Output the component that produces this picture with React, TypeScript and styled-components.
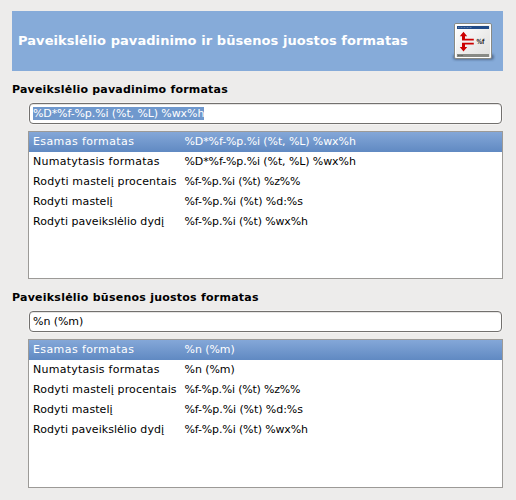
import React from "react";
import styled, { createGlobalStyle } from "styled-components";

const GlobalStyle = createGlobalStyle`
  * { box-sizing: border-box; }
  body { margin: 0; background: #edeceb; color: #000; font: 11px/20px "DejaVu Sans", sans-serif; }
`;
const Page = styled.main`
  width: 516px;
  height: 500px;
  padding: 11px 13px 0 12px;
  background: #edeceb;
`;
const Banner = styled.header`
  height: 60px;
  padding: 0 5px 0 6px;
  display: flex;
  align-items: center;
  justify-content: space-between;
  background: #86abd9;
`;
const Title = styled.h1`
  margin: 0;
  font-size: 13px;
  font-weight: bold;
  letter-spacing: 0.07px;
  color: #fff;
`;
const Section = styled.section`
  height: 208px;
  padding-top: 9px;
`;
const Heading = styled.h2<{ $spacing: number }>`
  margin: 0 0 3px;
  font-size: 11px;
  line-height: 20px;
  letter-spacing: ${(p) => p.$spacing}px;
`;
const Entry = styled.div`
  height: 21px;
  margin: 0 1px 7px 17px;
  padding: 0 3px;
  border: 1px solid #72706e;
  border-radius: 4px;
  background: #fff;
  box-shadow: 0 0 0 1px #f5f4f3, inset 0 1px 0 #e6e5e4;
  line-height: 19px;
`;
const EntryText = styled.span<{ $selected?: boolean }>`
  display: inline-block;
  height: 13px;
  margin-top: 3px;
  line-height: 13px;
  vertical-align: top;
  background: ${(p) => (p.$selected ? "#6f98cd" : "none")};
`;
const List = styled.div<{ $height: number }>`
  height: ${(p) => p.$height}px;
  margin-left: 16px;
  border: 1px solid #9c9a97;
  background: #fff;
`;
const Row = styled.div<{ $selected?: boolean }>`
  display: grid;
  grid-template-columns: 151.5px 1fr;
  height: 20px;
  padding-left: 4px;
  white-space: nowrap;
  color: ${(p) => (p.$selected ? "#fff" : "#000")};
  background: ${(p) => (p.$selected ? "linear-gradient(#84a7d8, #6089c2)" : "none")};
`;
const Label = styled.span<{ $spacing: number; $light?: boolean }>`
  letter-spacing: ${(p) => p.$spacing}px;
  color: ${(p) => (p.$light ? "#fff" : "inherit")};
`;

const IconArt = styled.svg`
  display: block;
  flex: none;
`;

const Icon = () => (
  <IconArt width="48" height="46" viewBox="0 0 48 46">
    <defs>
      <linearGradient id="paper" x1="0" y1="0" x2="1" y2="1">
        <stop offset="0" stopColor="#fff" />
        <stop offset="1" stopColor="#dededc" />
      </linearGradient>
      <filter id="soft" x="-20%" y="-100%" width="140%" height="300%">
        <feGaussianBlur stdDeviation="1.3" />
      </filter>
    </defs>
    <rect x="3" y="36" width="41" height="6" rx="3" fill="#25364f" opacity="0.5" filter="url(#soft)" />
    <rect x="4.5" y="5.5" width="37" height="35" rx="1.5" fill="url(#paper)" stroke="#888a85" />
    <rect x="5.5" y="6.5" width="35" height="33" rx="0.5" fill="none" stroke="#fff" />
    <rect x="7" y="8" width="32" height="3" fill="#204a87" />
    <path d="M8 9.5h14" stroke="#7690b7" strokeWidth="0.7" strokeDasharray="1 0.5" />
    <rect x="7" y="36" width="32" height="3" fill="#888a85" />
    <path d="M8 37.5h5" stroke="#555753" strokeWidth="0.8" strokeDasharray="1 0.4" />
    <path
      d="M13.5 13.8l3.7 4.4H15v2.6h8.8v1.6H12v-4.2H9.800zM12 24.800h11.800v1.600H15v2.600h2.200l-3.700 4.400-3.700-4.400H12z"
      fill="#cc0000"
    />
    <text x="26.5" y="26" fontFamily="DejaVu Sans, sans-serif" fontWeight="bold" fontSize="7" textLength="8" lengthAdjust="spacingAndGlyphs" fill="#222">%f</text>
  </IconArt>
);

type Item = { name: string; nameSpacing: number; format: string; formatSpacing: number };

const formats: Item[] = [
  { name: "Rodyti mastelį procentais", nameSpacing: 0.16, format: "%f-%p.%i (%t) %z%%", formatSpacing: -0.22 },
  { name: "Rodyti mastelį", nameSpacing: 0.08, format: "%f-%p.%i (%t) %d:%s", formatSpacing: -0.08 },
  { name: "Rodyti paveikslėlio dydį", nameSpacing: 0.04, format: "%f-%p.%i (%t) %wx%h", formatSpacing: -0.13 },
];

type SectionProps = {
  title: string;
  titleSpacing: number;
  value: string;
  valueSpacing: number;
  listHeight: number;
  selected?: boolean;
};

function FormatSection({ title, titleSpacing, value, valueSpacing, listHeight, selected }: SectionProps) {
  const rows: Item[] = [
    { name: "Esamas formatas", nameSpacing: 0.4, format: value, formatSpacing: valueSpacing },
    { name: "Numatytasis formatas", nameSpacing: 0.25, format: value, formatSpacing: valueSpacing },
    ...formats,
  ];
  return (
    <Section>
      <Heading $spacing={titleSpacing}>{title}</Heading>
      <Entry>
        <EntryText $selected={selected}>
          <Label $spacing={valueSpacing} $light={selected}>{value}</Label>
        </EntryText>
      </Entry>
      <List $height={listHeight}>
        {rows.map((row, i) => (
          <Row key={row.name} $selected={i === 0}>
            <Label $spacing={row.nameSpacing}>{row.name}</Label>
            <Label $spacing={row.formatSpacing}>{row.format}</Label>
          </Row>
        ))}
      </List>
    </Section>
  );
}

export default function App() {
  return (
    <Page>
      <GlobalStyle />
      <Banner>
        <Title>Paveikslėlio pavadinimo ir būsenos juostos formatas</Title>
        <Icon />
      </Banner>
      <FormatSection
        title="Paveikslėlio pavadinimo formatas"
        titleSpacing={0.2}
        value="%D*%f-%p.%i (%t, %L) %wx%h"
        valueSpacing={-0.1}
        listHeight={148}
        selected
      />
      <FormatSection
        title="Paveikslėlio būsenos juostos formatas"
        titleSpacing={0.24}
        value="%n (%m)"
        valueSpacing={-0.06}
        listHeight={149}
      />
    </Page>
  );
}
